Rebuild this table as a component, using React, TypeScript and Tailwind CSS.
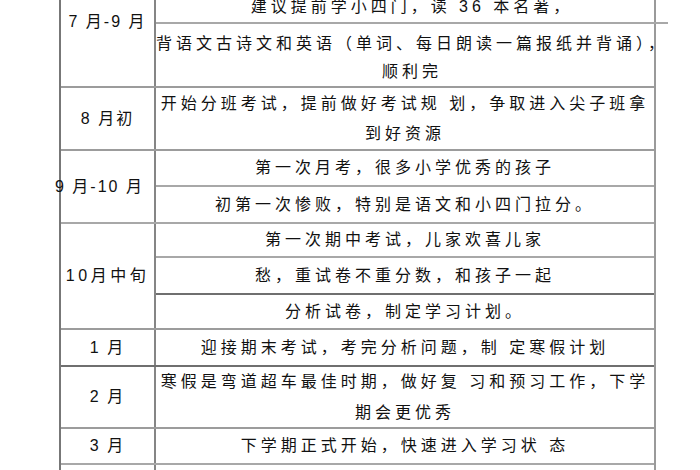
import React from "react";

const Line = ({ children }: { children: React.ReactNode }) => (
  <div className="whitespace-nowrap text-center text-[16px] tracking-[4px]">{children}</div>
);

const Sub = ({ h, last, dark, children }: { h: string; last?: boolean; dark?: boolean; children: React.ReactNode }) => (
  <div
    className={`${h} flex flex-col items-stretch justify-center ${
      last ? "" : dark ? "border-b-2 border-[#6f6f6f]" : "border-b-2 border-[#a8a8a8]"
    }`}
  >
    {children}
  </div>
);

const Label = ({ children, cls }: { children: React.ReactNode; cls?: string }) => (
  <div
    className={`w-[95px] shrink-0 border-r-2 border-[#858585] flex text-[16px] whitespace-nowrap ${
      cls ?? "items-center justify-center tracking-[2px]"
    }`}
  >
    {children}
  </div>
);

export default function App() {
  return (
    <div className="w-[700px] h-[470px] overflow-hidden bg-white pl-[59px] font-['Liberation_Sans','Noto_Sans_CJK_SC',sans-serif] text-[#111111]">
      <div className="-mt-[8px] w-[597px] border-l-2 border-r-2 border-l-[#777777] border-r-[#9a9a9a]">
        {/* Row A */}
        <div className="flex border-b-2 border-[#9c9c9c]">
          <Label cls="items-start justify-center pt-[18px] leading-[24px] tracking-[2px]">7 月-9 月</Label>
          <div className="flex-1 flex flex-col">
            <Sub h="h-[32px]">
              <Line>建议提前学小四门，读 36 本名著，</Line>
            </Sub>
            <div className="h-[62px] flex flex-col pt-[6px] leading-[28px]">
              <Line>背语文古诗文和英语（单词、每日朗读一篇报纸并背诵），</Line>
              <Line>顺利完</Line>
            </div>
          </div>
        </div>
        {/* Row B */}
        <div className="flex border-b-2 border-[#9c9c9c]">
          <Label>8 月初</Label>
          <div className="flex-1 h-[61px] flex flex-col justify-center leading-[30px]">
            <Line>开始分班考试，提前做好考试规 划，争取进入尖子班拿</Line>
            <Line>到好资源</Line>
          </div>
        </div>
        {/* Row C */}
        <div className="flex border-b-2 border-[#a8a8a8]">
          <Label cls="items-center justify-start tracking-[2px]">
            <span className="-ml-[6px]">9 月-10 月</span>
          </Label>
          <div className="flex-1 flex flex-col">
            <Sub h="h-[36px]">
              <Line>第一次月考，很多小学优秀的孩子</Line>
            </Sub>
            <Sub h="h-[35px]" last>
              <Line>初第一次惨败，特别是语文和小四门拉分。</Line>
            </Sub>
          </div>
        </div>
        {/* Row D */}
        <div className="flex border-b-2 border-[#9c9c9c]">
          <Label cls="items-center justify-center tracking-[3.5px]">10月中旬</Label>
          <div className="flex-1 flex flex-col">
            <Sub h="h-[34px]">
              <Line>第一次期中考试，儿家欢喜儿家</Line>
            </Sub>
            <Sub h="h-[37px]" dark>
              <Line>愁，重试卷不重分数，和孩子一起</Line>
            </Sub>
            <Sub h="h-[33px]" last>
              <Line>分析试卷，制定学习计划。</Line>
            </Sub>
          </div>
        </div>
        {/* Row E */}
        <div className="flex border-b-2 border-[#6f6f6f]">
          <Label>1 月</Label>
          <div className="flex-1 h-[35px] flex flex-col justify-center">
            <Line>迎接期末考试，考完分析问题，制 定寒假计划</Line>
          </div>
        </div>
        {/* Row F */}
        <div className="flex border-b-2 border-[#9c9c9c]">
          <Label>2 月</Label>
          <div className="flex-1 h-[60px] flex flex-col justify-center leading-[31px]">
            <Line>寒假是弯道超车最佳时期，做好复 习和预习工作，下学</Line>
            <Line>期会更优秀</Line>
          </div>
        </div>
        {/* Row G */}
        <div className="flex border-b-2 border-[#a8a8a8]">
          <Label>3 月</Label>
          <div className="flex-1 h-[34px] flex flex-col justify-center">
            <Line>下学期正式开始，快速进入学习状 态</Line>
          </div>
        </div>
        {/* Row H (cut off) */}
        <div className="flex">
          <Label> </Label>
          <div className="flex-1 h-[40px]" />
        </div>
      </div>
    </div>
  );
}
